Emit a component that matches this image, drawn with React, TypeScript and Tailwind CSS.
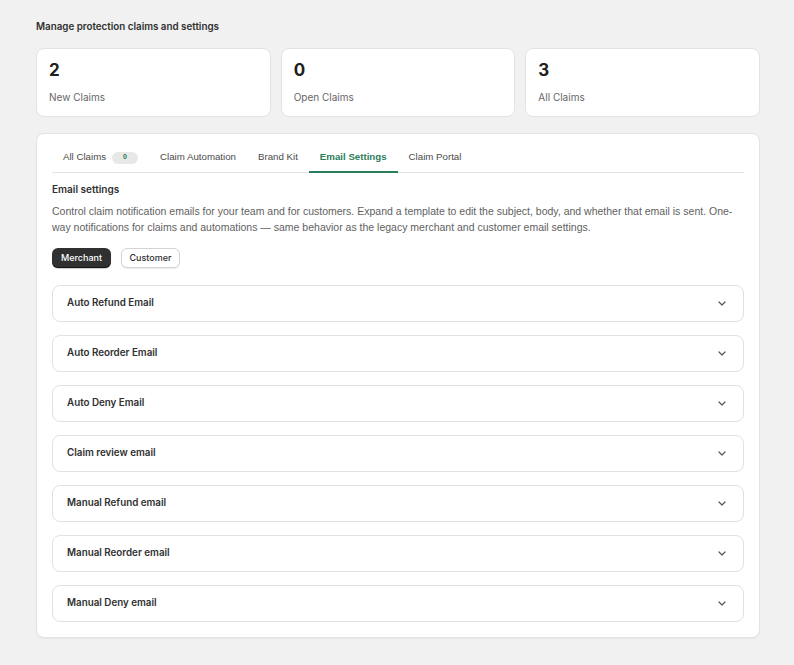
import React from "react";

const inter = { fontFamily: "Inter, 'Noto Sans', sans-serif" };
const arial = { fontFamily: "'Liberation Sans', Arial, sans-serif" };

const stats = [
  { n: "2", label: "New Claims" },
  { n: "0", label: "Open Claims" },
  { n: "3", label: "All Claims" },
];

const emails = [
  "Auto Refund Email",
  "Auto Reorder Email",
  "Auto Deny Email",
  "Claim review email",
  "Manual Refund email",
  "Manual Reorder email",
  "Manual Deny email",
];

function Chevron() {
  return (
    <svg width="8" height="5" viewBox="0 0 8 5" fill="none">
      <path d="M1 1L4 4L7 1" stroke="#555555" strokeWidth="1.2" strokeLinecap="round" strokeLinejoin="round" />
    </svg>
  );
}

export default function App() {
  return (
    <div className="min-h-[665px] w-full bg-[#f1f1f1] pl-[36px] pr-[34px] pt-[20px] pb-[28px]" style={inter}>
      <div className="h-[14px] text-[9.8px] leading-[14px] font-semibold text-[#303030]">
        Manage protection claims and settings
      </div>

      <div className="mt-[14px] grid grid-cols-3 gap-[10px]">
        {stats.map((s) => (
          <div
            key={s.label}
            className="h-[69px] rounded-[8px] border border-[#e3e3e3] bg-white px-[12px] pt-[11px]"
          >
            <div className="text-[17px] leading-[20px] font-bold text-[#202020]">{s.n}</div>
            <div className="mt-[10px] text-[10px] leading-[14px] text-[#666666]">{s.label}</div>
          </div>
        ))}
      </div>

      <div className="mt-[16px] rounded-[8px] border border-[#e3e3e3] bg-white px-[15px] pt-[9px] pb-[15px] shadow-[0_1px_1px_rgba(0,0,0,0.04)]">
        <div className="flex h-[30px] border-b border-[#e3e3e3]" style={arial}>
          <div className="flex items-center px-[11px] text-[9.7px] text-[#4a4a4a]">
            All Claims
            <span className="ml-[6px] flex h-[12px] w-[26px] items-center justify-center rounded-full bg-[#e8e8e8] text-[7px] font-bold text-[#1f7a4f]">
              0
            </span>
          </div>
          <div className="flex items-center px-[11px] text-[9.7px] text-[#4a4a4a]">Claim Automation</div>
          <div className="flex items-center px-[11px] text-[9.7px] text-[#4a4a4a]">Brand Kit</div>
          <div className="-mb-px flex items-center border-b-2 border-[#2a7d5a] px-[11px] text-[9.7px] font-bold text-[#2a7d5a]">
            Email Settings
          </div>
          <div className="flex items-center px-[11px] text-[9.7px] text-[#4a4a4a]">Claim Portal</div>
        </div>

        <div className="mt-[9px] text-[10px] leading-[14px] font-semibold text-[#303030]">Email settings</div>
        <div className="mt-[7px] text-[10.5px] leading-[16px] text-[#616161]" style={arial}>
          Control claim notification emails for your team and for customers. Expand a template to edit the subject, body, and whether that email is sent. One-way notifications for claims and automations — same behavior as the legacy merchant and customer email settings.
        </div>

        <div className="mt-[13px] flex gap-[10px]">
          <button className="flex h-[20px] w-[59px] items-center justify-center rounded-[6px] bg-[#303030] text-[9px] font-medium text-white shadow-[inset_0_-1px_0_rgba(0,0,0,0.6),0_1px_1px_rgba(0,0,0,0.2)]">
            Merchant
          </button>
          <button className="flex h-[20px] w-[59px] items-center justify-center rounded-[6px] border border-[#d4d4d4] bg-white text-[9px] font-medium text-[#303030] shadow-[0_1px_1px_rgba(0,0,0,0.08)]">
            Customer
          </button>
        </div>

        <div className="mt-[17px] flex flex-col gap-[13px]">
          {emails.map((e) => (
            <div
              key={e}
              className="flex h-[37px] items-center justify-between rounded-[8px] border border-[#e1e1e1] bg-white pl-[14px] pr-[17px]"
            >
              <span className="text-[9.8px] font-semibold text-[#303030]">{e}</span>
              <Chevron />
            </div>
          ))}
        </div>
      </div>
    </div>
  );
}
